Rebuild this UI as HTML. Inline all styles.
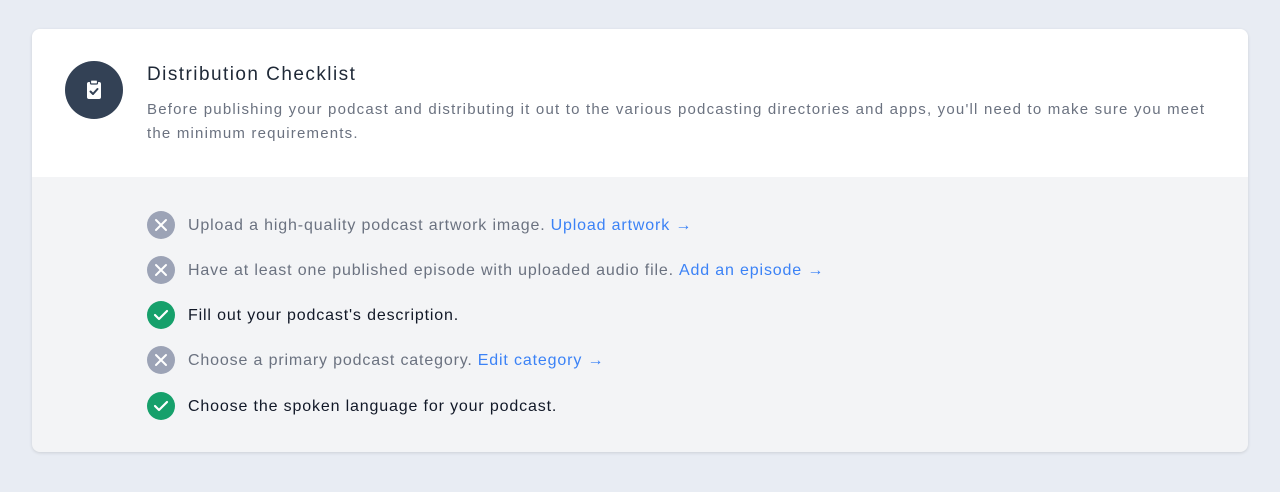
<!DOCTYPE html>
<html><head><style>
body{margin:0;background:#e8ecf3;font-family:"Liberation Sans",sans-serif;width:1280px;height:492px;overflow:hidden}
.card{position:absolute;left:32px;top:29px;width:1216px;height:423px;background:#f3f4f6;border-radius:8px;box-shadow:0 1px 3px rgba(0,0,0,.12);overflow:hidden}
.head{background:#fff;height:148px;position:relative}
.ic{position:absolute;left:33px;top:32px;width:58px;height:58px;border-radius:50%;background:#334155}
.ic svg{position:absolute;left:19px;top:18px}
h1{position:absolute;left:115px;top:35px;margin:0;font-size:19px;font-weight:400;color:#1f2937;letter-spacing:1.45px}
.desc{position:absolute;left:115px;top:69px;width:1080px;font-size:15px;line-height:24px;color:#6b7280;margin:0;letter-spacing:1.2px}
.item{position:absolute;left:115px;height:28px;display:flex;align-items:center;font-size:16px;letter-spacing:0.85px}
.item span,.item a{position:relative;top:1px}
.c{width:28px;height:28px;border-radius:50%;margin-right:13px;display:flex;align-items:center;justify-content:center}
.x{background:#9ca3b6}.ok{background:#16a06b}
.g{color:#6b7280}.d{color:#111827}
a{color:#3b82f6;text-decoration:none;margin-left:5px}
</style></head><body>
<div class="card">
<div class="head">
<div class="ic"><svg width="20" height="22" viewBox="0 0 20 22"><rect x="3" y="3" width="14" height="17" rx="2" fill="#fff"/><rect x="6.5" y="1" width="7" height="4" rx="1" fill="#fff" stroke="#334155" stroke-width="1.2"/><path d="M6.5 12.5l2.5 2.5 4.5-5" stroke="#334155" stroke-width="2" fill="none" stroke-linecap="round" stroke-linejoin="round"/></svg></div>
<h1>Distribution Checklist</h1>
<p class="desc">Before publishing your podcast and distributing it out to the various podcasting directories and apps, you'll need to make sure you meet the minimum requirements.</p>
</div>
<div class="item" style="top:182px"><div class="c x"><svg width="14" height="14"><path d="M2 2l10 10M12 2L2 12" stroke="#fff" stroke-width="2" stroke-linecap="round"/></svg></div><span class="g">Upload a high-quality podcast artwork image.</span><a>Upload artwork →</a></div>
<div class="item" style="top:227px"><div class="c x"><svg width="14" height="14"><path d="M2 2l10 10M12 2L2 12" stroke="#fff" stroke-width="2" stroke-linecap="round"/></svg></div><span class="g">Have at least one published episode with uploaded audio file.</span><a>Add an episode →</a></div>
<div class="item" style="top:272px"><div class="c ok"><svg width="16" height="14"><path d="M2 7l4 4 8-8" stroke="#fff" stroke-width="2.2" fill="none" stroke-linecap="round" stroke-linejoin="round"/></svg></div><span class="d">Fill out your podcast's description.</span></div>
<div class="item" style="top:317px"><div class="c x"><svg width="14" height="14"><path d="M2 2l10 10M12 2L2 12" stroke="#fff" stroke-width="2" stroke-linecap="round"/></svg></div><span class="g">Choose a primary podcast category.</span><a>Edit category →</a></div>
<div class="item" style="top:363px"><div class="c ok"><svg width="16" height="14"><path d="M2 7l4 4 8-8" stroke="#fff" stroke-width="2.2" fill="none" stroke-linecap="round" stroke-linejoin="round"/></svg></div><span class="d">Choose the spoken language for your podcast.</span></div>
</div>
</body></html>
